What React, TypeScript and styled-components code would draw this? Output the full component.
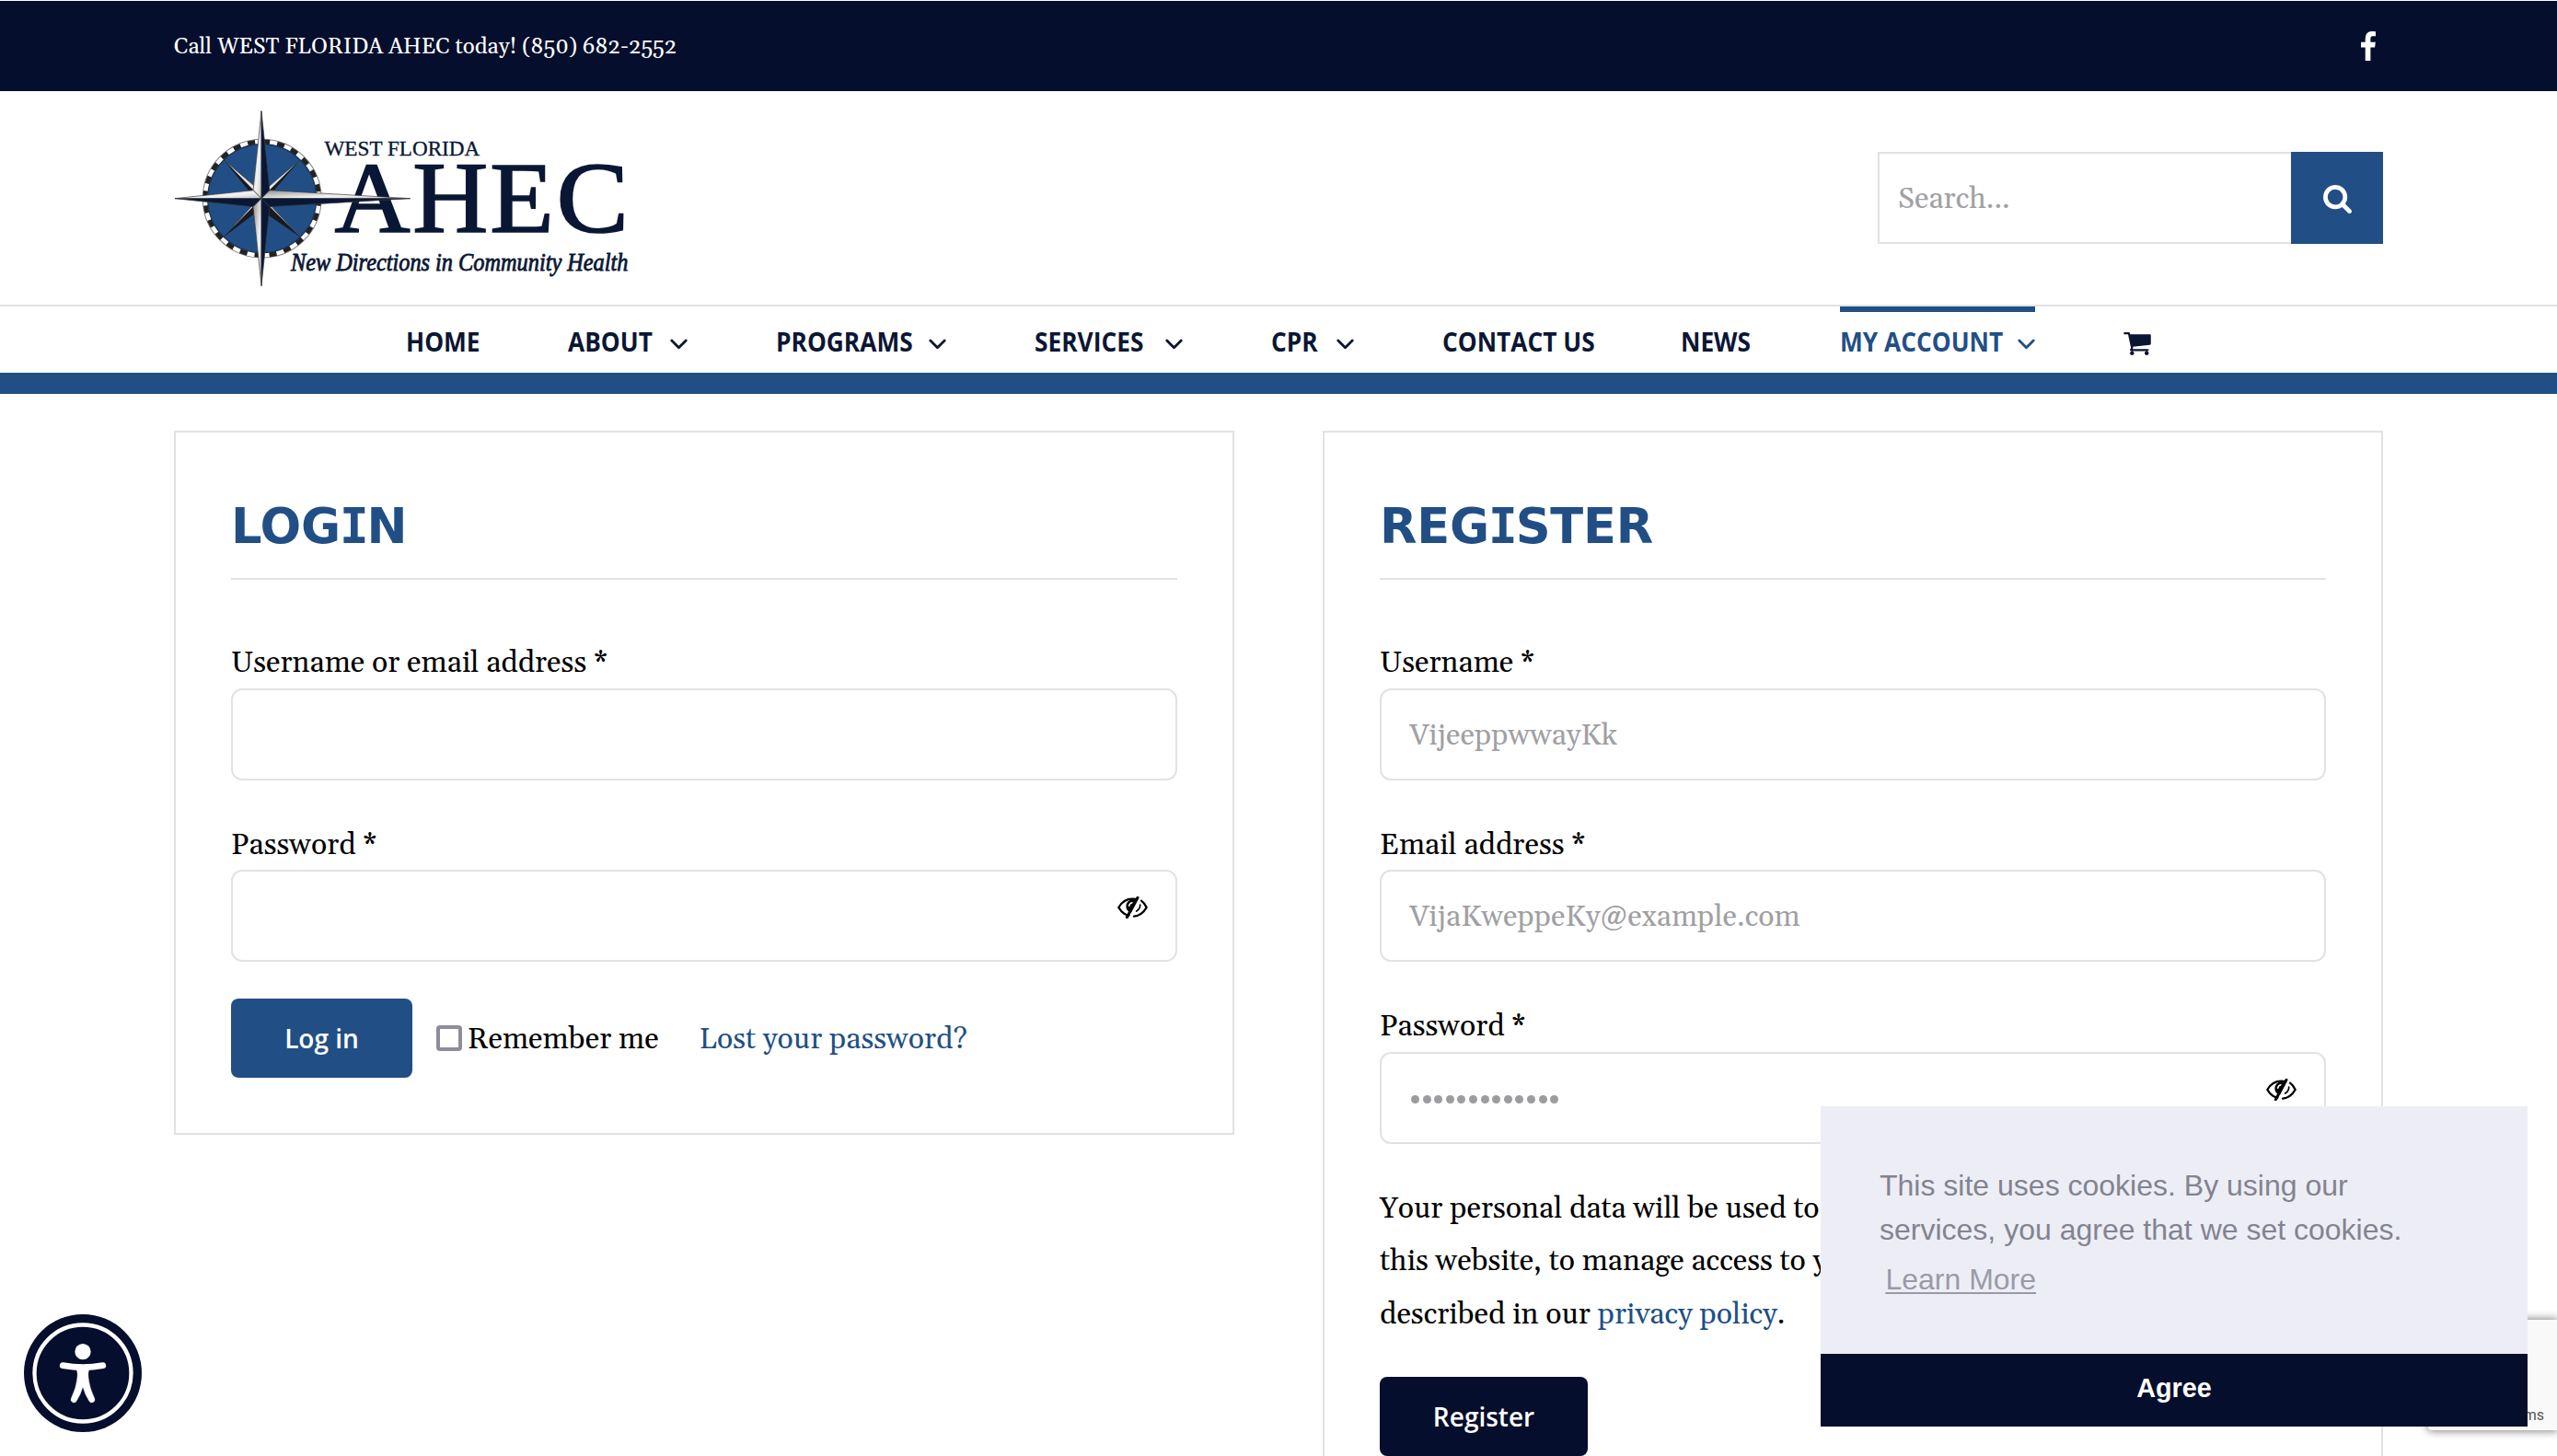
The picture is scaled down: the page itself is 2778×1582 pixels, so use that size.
import React from "react";
import styled, { createGlobalStyle } from "styled-components";

const navy = "#050e2c";
const blue = "#214f85";
const line = "#e2e2e2";
const serif = `Gelasio, "DejaVu Serif Condensed", "Liberation Serif", serif`;

const GlobalStyle = createGlobalStyle`
  *, *::before, *::after { box-sizing: border-box; }
  body {
    margin: 0;
    background: #fff;
    color: #000;
    font-family: ${serif};
    font-size: 32px;
    line-height: 1.8;
    overflow: hidden;
  }
  a { text-decoration: none; color: ${blue}; }
`;

const Page = styled.div`
  position: relative;
  width: 2778px;
  height: 1582px;
  overflow: hidden;
  background: #fff;
  border-top: 1px solid #fff;
`;

const TopBar = styled.div`
  display: flex;
  align-items: center;
  justify-content: space-between;
  height: 98px;
  padding: 0 197px 0 189px;
  background: ${navy};
  color: #fff;
`;

const Contact = styled.span`
  padding-top: 3px;
  font-size: 24px;
  font-variant-numeric: oldstyle-nums;
`;

const Header = styled.header`
  display: flex;
  align-items: center;
  justify-content: space-between;
  height: 232px;
  padding: 0 189px 0 170px;
`;

const SearchForm = styled.form`
  display: flex;
  width: 549px;
  height: 100px;
`;

const SearchInput = styled.input`
  flex: 1;
  min-width: 0;
  padding: 3px 20px 0;
  border: 2px solid ${line};
  border-right: 0;
  border-radius: 0;
  outline: 0;
  background: #fff;
  font: 32px ${serif};
  &::placeholder { color: #a0a0a4; opacity: 1; }
`;

const SearchButton = styled.button`
  display: flex;
  align-items: center;
  justify-content: center;
  width: 100px;
  padding: 2px 0 0;
  border: 0;
  background: ${blue};
`;

const Nav = styled.nav`
  display: flex;
  justify-content: center;
  gap: 96px;
  height: 97px;
  padding-right: 1px;
  border-top: 2px solid ${line};
  border-bottom: 23px solid ${blue};
`;

const NavItem = styled.a<{ $width: number; $active?: boolean }>`
  display: flex;
  align-items: center;
  justify-content: space-between;
  width: ${(p) => p.$width}px;
  padding-bottom: 3px;
  border-top: 6px solid ${(p) => (p.$active ? blue : "transparent")};
  color: ${(p) => (p.$active ? blue : "#0b1633")};
  font: 700 29.4px "Open Sans", sans-serif;
  white-space: nowrap;
  svg { flex: none; }
`;

const NavLabel = styled.span`
  width: 0;
  transform: scaleX(0.895);
  transform-origin: 0 50%;
`;

const Columns = styled.main`
  display: grid;
  grid-template-columns: 1152px 1152px;
  gap: 96px;
  align-items: start;
  padding: 40px 189px 0;
`;

const Card = styled.section`
  padding: 60px;
  border: 2px solid ${line};
`;

const CardTitle = styled.h2`
  height: 100px;
  margin: 0 0 60px;
  border-bottom: 2px solid ${line};
  color: ${blue};
  font: 700 52.6px/84px "DejaVu Sans", sans-serif;
  letter-spacing: -0.2px;
`;

const SlabLetter = styled.span`
  font-family: "DejaVu Sans Mono", monospace;
  letter-spacing: -2px;
  margin-left: -1px;
`;

const FieldGroup = styled.div`
  display: flex;
  flex-direction: column;
  margin-bottom: 40px;
`;

const FieldLabel = styled.label`
  padding-top: 4px;
  line-height: 53.6px;
`;

const InputBox = styled.div`
  display: flex;
  height: 100px;
  border: 2px solid ${line};
  border-radius: 12px;
  background: #fff;
`;

const Input = styled.input`
  flex: 1;
  min-width: 0;
  padding: 3px 30px 0;
  border: 0;
  outline: 0;
  background: transparent;
  font: 32px ${serif};
  &::placeholder { color: #a0a0a4; opacity: 1; }
`;

const Dots = styled.div`
  display: flex;
  flex: 1;
  align-items: center;
  gap: 3.6px;
  padding: 3px 0 0 32px;
`;

const Dot = styled.i`
  width: 9px;
  height: 9px;
  border-radius: 50%;
  background: #9c9ca0;
`;

const EyeButton = styled.button`
  display: flex;
  align-self: flex-start;
  margin: 27px 30px 0 0;
  padding: 0;
  border: 0;
  background: transparent;
`;

const Button = styled.button<{ $width: number; $bg: string }>`
  width: ${(p) => p.$width}px;
  height: 86px;
  padding: 0;
  border: 0;
  border-radius: 8px;
  background: ${(p) => p.$bg};
  color: #fff;
  font: 600 28px "Open Sans", sans-serif;
`;

const LoginActions = styled.div`
  display: flex;
  align-items: center;
`;

const Remember = styled.label`
  display: flex;
  align-items: center;
  gap: 6px;
  margin: 0 44px 0 26px;
`;

const ActionText = styled.span`
  padding-top: 4px;
`;

const Checkbox = styled.input`
  appearance: none;
  width: 28px;
  height: 28px;
  margin: 0;
  border: 4px solid #8f8b9c;
  border-radius: 4px;
  background: #fff;
`;

const Policy = styled.p`
  margin: 0 0 38px;
  padding-top: 2px;
`;

const AccessButton = styled.button`
  position: absolute;
  left: 26px;
  top: 1427px;
  display: flex;
  padding: 0;
  border: 0;
  background: transparent;
`;

const Recaptcha = styled.div`
  position: absolute;
  top: 1433px;
  right: 0;
  display: flex;
  align-items: flex-end;
  justify-content: flex-end;
  width: 140px;
  height: 120px;
  padding: 0 14px 6px 0;
  border-radius: 4px 0 0 4px;
  background: #f9f9f9;
  box-shadow: 0 0 10px 1px gray;
  color: #555;
  font: 16px/20px Roboto, sans-serif;
  white-space: nowrap;
`;

const CookieDialog = styled.div`
  position: absolute;
  right: 32px;
  bottom: 32px;
  display: flex;
  flex-direction: column;
  width: 768px;
  font-family: "Liberation Sans", Arial, sans-serif;
`;

const CookieText = styled.div`
  height: 269px;
  padding: 62px 64px 0;
  background: #edeef5;
  color: #838391;
  font-size: 32px;
  line-height: 48px;
`;

const LearnMore = styled.a`
  display: inline-block;
  padding: 6.4px;
  color: #9a9aa7;
  text-decoration: underline;
  text-decoration-thickness: 2px;
  text-underline-offset: 3px;
`;

const Agree = styled.button`
  height: 79px;
  padding: 0 0 5px;
  border: 0;
  background: ${navy};
  color: #fff;
  font: 700 28.8px "Liberation Sans", Arial, sans-serif;
`;

const FacebookIcon = () => (
  <svg width="16" height="32" viewBox="479 0 864 1664" preserveAspectRatio="none" fill="#fff">
    <path d="M1343 12v264h-157q-86 0-116 36t-30 108v189h293l-39 296h-254v759h-306v-759h-255v-296h255v-218q0-186 104-288.500t277-102.500q147 0 228 12z" />
  </svg>
);

const SearchIcon = () => (
  <svg width="31" height="31" viewBox="64 128 1664 1664" fill="#fff">
    <path d="M1216 832q0-185-131.500-316.500t-316.500-131.500-316.500 131.500-131.500 316.500 131.500 316.500 316.500 131.500 316.500-131.500 131.500-316.500zm512 832q0 52-38 90t-90 38q-54 0-90-38l-343-342q-179 124-399 124-143 0-273.500-55.500t-225-150-150-225-55.500-273.500 55.500-273.500 150-225 225-150 273.500-55.500 273.500 55.500 225 150 150 225 55.500 273.500q0 220-124 399l343 343q37 37 37 90z" />
  </svg>
);

const CartSvg = styled.svg`
  margin-top: 5px;
`;

const CartIcon = () => (
  <CartSvg width="30" height="25" viewBox="64 256 1664 1408" fill="#0b1633">
    <path d="M704 1536q0 52-38 90t-90 38-90-38-38-90 38-90 90-38 90 38 38 90zm896 0q0 52-38 90t-90 38-90-38-38-90 38-90 90-38 90 38 38 90zm128-1088v512q0 24-16.500 42.500t-40.500 21.500l-1044 122q13 60 13 70 0 16-24 64h920q26 0 45 19t19 45-19 45-45 19h-1024q-26 0-45-19t-19-45q0-11 8-31.500t16-36 21.500-40 15.500-29.500l-177-823h-204q-26 0-45-19t-19-45 19-45 45-19h256q16 0 28.500 6.500t19.500 15.500 13 24.500 8 26 5.500 29.500 4.500 26h1201q26 0 45 19t19 45z" />
  </CartSvg>
);

const ChevronSvg = styled.svg`
  margin: 6px 0 0 auto;
`;

const Chevron = () => (
  <ChevronSvg width="19" height="12" viewBox="0 0 19 12" fill="none" stroke="currentColor" strokeWidth="2.8" strokeLinecap="round" strokeLinejoin="round">
    <path d="M1.800 2l7.700 7.700L17.200 2" />
  </ChevronSvg>
);

const EyeIcon = () => (
  <svg width="33" height="24" viewBox="0 0 99 72" fill="none">
    <path d="M4 36C14 18 30 8 49.500 8S85 18 95 36C85 54 69 64 49.500 64S14 54 4 36z" stroke="#000" strokeWidth="7" strokeLinejoin="round" />
    <circle cx="50" cy="32" r="22" fill="#000" />
    <path d="M38 31q1-9 10-11" stroke="#fff" strokeWidth="4.500" strokeLinecap="round" />
    <path d="M71 2L35 72H99V0z" fill="#fff" />
    <path d="M78 14Q89 22 95 36Q80 62 54 65" stroke="#000" strokeWidth="7" strokeLinecap="round" strokeLinejoin="round" />
    <path d="M74 27q1 13-12 21" stroke="#000" strokeWidth="5" strokeLinecap="round" />
    <path d="M66 4L31 68" stroke="#000" strokeWidth="9" strokeLinecap="round" />
  </svg>
);

const AccessIcon = () => (
  <svg width="128" height="128" viewBox="0 0 384 384">
    <circle cx="192" cy="192" r="192" fill={navy} />
    <circle cx="192" cy="192" r="157.500" fill="none" stroke="#fff" strokeWidth="13" />
    <circle cx="192" cy="122" r="26" fill="#fff" />
    <path d="M127 167Q192 179 257 167" fill="none" stroke="#fff" strokeWidth="21" strokeLinecap="round" />
    <path d="M168 176H216Q208 184 210 205Q213 238 230 274A9 9 0 0 1 212 282Q199 262 192 237Q185 262 172 282A9 9 0 0 1 154 274Q171 238 174 205Q176 184 168 176z" fill="#fff" stroke="#fff" strokeWidth="1" />
  </svg>
);

const Logo = () => (
  <svg width="540" height="230" viewBox="0 0 1568 690" preserveAspectRatio="none" fontFamily='"Liberation Serif", serif' fill="#0a1734">
    <defs>
      <linearGradient id="silver" x1="0" y1="0" x2="1" y2="1">
        <stop offset="0" stopColor="#8d8d8d" />
        <stop offset="0.6" stopColor="#f4f4f4" />
        <stop offset="1" stopColor="#c4c4c8" />
      </linearGradient>
    </defs>
    <g transform="translate(333 347) scale(1 1.033)">
      <circle r="187" fill="#fff" stroke="#888" strokeWidth="3" />
      <circle r="179" fill="none" stroke="#222" strokeWidth="15" strokeDasharray="23.430 23.430" />
      <circle r="171" fill={blue} stroke="#1b3354" strokeWidth="4" />
    </g>
    <g fill="#e6e6e8" stroke="#333" strokeWidth="2">
      <path d="M213 222L322 318L331 347z" />
      <path d="M213 472L306 366L331 347z" />
      <path d="M452 222L350 312L331 347z" />
      <path d="M452 472L360 370L331 347z" />
    </g>
    <g fill="#1a1a1e">
      <path d="M213 222L296 328L331 347z" />
      <path d="M213 472L318 390L331 347z" />
      <path d="M452 222L366 326L331 347z" />
      <path d="M452 472L340 392L331 347z" />
    </g>
    <text y="208" fontSize="69" x="530" textLength="490" lengthAdjust="spacingAndGlyphs" stroke="#0a1734" strokeWidth="1">WEST FLORIDA</text>
    <g stroke="#0a1734" strokeWidth="5">
      <text y="457" fontSize="330" x="562 808 1052">AHE</text>
      <text y="457" fontSize="330" x="1262" textLength="228" lengthAdjust="spacingAndGlyphs">C</text>
    </g>
    <text y="583" fontSize="82" x="424" fontStyle="italic" textLength="1064" lengthAdjust="spacingAndGlyphs" stroke="#0a1734" strokeWidth="2.500">New Directions in Community Health</text>
    <g stroke="#3a3a42" strokeWidth="2" strokeLinejoin="round">
      <path d="M331 62L305 320L331 347z" fill="url(#silver)" />
      <path d="M331 62L357 320L331 347z" fill="#0a1734" />
      <path d="M58 347L305 320L331 347z" fill="url(#silver)" />
      <path d="M58 347L305 374L331 347z" fill="#0a1734" />
      <path d="M800 347L357 320L331 347z" fill="url(#silver)" />
      <path d="M800 347L357 374L331 347z" fill="#0a1734" />
      <path d="M331 632L305 374L331 347z" fill="url(#silver)" />
      <path d="M331 632L357 374L331 347z" fill="#0a1734" />
    </g>
  </svg>
);

const menu = [
  { label: "HOME", width: 80 },
  { label: "ABOUT", width: 130, sub: true },
  { label: "PROGRAMS", width: 185, sub: true },
  { label: "SERVICES", width: 161, sub: true },
  { label: "CPR", width: 90, sub: true },
  { label: "CONTACT US", width: 163 },
  { label: "NEWS", width: 77 },
  { label: "MY ACCOUNT", width: 212, sub: true, active: true },
];

function Field({ label, placeholder, type = "text", eye, dots }: { label: string; placeholder?: string; type?: string; eye?: boolean; dots?: number }) {
  return (
    <FieldGroup>
      <FieldLabel>{label} *</FieldLabel>
      <InputBox>
        {dots ? (
          <Dots>{Array.from({ length: dots }, (_, i) => <Dot key={i} />)}</Dots>
        ) : (
          <Input type={type} placeholder={placeholder} />
        )}
        {eye && <EyeButton type="button" aria-label="Show password"><EyeIcon /></EyeButton>}
      </InputBox>
    </FieldGroup>
  );
}

export default function App() {
  return (
    <Page>
      <GlobalStyle />
      <TopBar>
        <Contact>Call WEST FLORIDA AHEC today! (850) 682-2552</Contact>
        <FacebookIcon />
      </TopBar>
      <Header>
        <Logo />
        <SearchForm>
          <SearchInput placeholder="Search..." />
          <SearchButton type="button" aria-label="Search"><SearchIcon /></SearchButton>
        </SearchForm>
      </Header>
      <Nav>
        {menu.map((m) => (
          <NavItem key={m.label} $width={m.width} $active={m.active}>
            <NavLabel>{m.label}</NavLabel>
            {m.sub && <Chevron />}
          </NavItem>
        ))}
        <NavItem $width={30}><CartIcon /></NavItem>
      </Nav>
      <Columns>
        <Card>
          <CardTitle>LOG<SlabLetter>I</SlabLetter>N</CardTitle>
          <Field label="Username or email address" />
          <Field label="Password" type="password" eye />
          <LoginActions>
            <Button type="button" $width={197} $bg={blue}>Log in</Button>
            <Remember><Checkbox type="checkbox" /><ActionText>Remember me</ActionText></Remember>
            <ActionText as="a">Lost your password?</ActionText>
          </LoginActions>
        </Card>
        <Card>
          <CardTitle>REG<SlabLetter>I</SlabLetter>STER</CardTitle>
          <Field label="Username" placeholder="VijeeppwwayKk" />
          <Field label="Email address" placeholder="VijaKweppeKy@example.com" type="email" />
          <Field label="Password" eye dots={13} />
          <Policy>
            Your personal data will be used to support your experience throughout this website, to manage access to your account, and for other purposes described in our <a>privacy policy</a>.
          </Policy>
          <Button type="button" $width={226} $bg={navy}>Register</Button>
        </Card>
      </Columns>
      <Recaptcha>Privacy - Terms</Recaptcha>
      <CookieDialog>
        <CookieText>
          This site uses cookies. By using our services, you agree that we set cookies.<br />
          <LearnMore>Learn More</LearnMore>
        </CookieText>
        <Agree type="button">Agree</Agree>
      </CookieDialog>
      <AccessButton type="button" aria-label="Accessibility options"><AccessIcon /></AccessButton>
    </Page>
  );
}
